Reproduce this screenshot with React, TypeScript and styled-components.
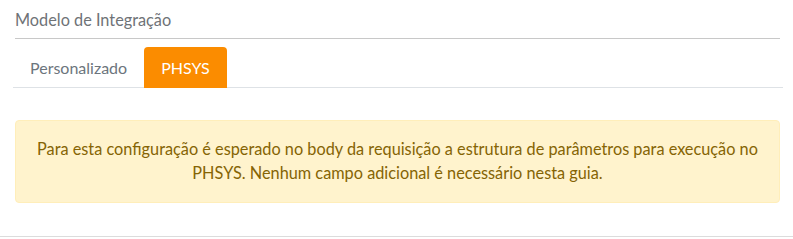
import styled, { createGlobalStyle } from "styled-components";

const GlobalStyle = createGlobalStyle`
    body {
        margin: 0;
        background: #fff;
        font-family: Lato, "Noto Sans", sans-serif;
    }
`;

const Page = styled.div`
    width: 793px;
    border-bottom: 1px solid #dcdcdc;
    padding: 0 13px 33px 15px;
    box-sizing: border-box;
`;

const Title = styled.div`
    padding: 9px 0 7px;
    line-height: 22px;
    font-size: 16.3px;
    color: #6f7377;
    border-bottom: 1px solid #c8c8c8;
`;

const TabNav = styled.div`
    display: flex;
    margin: 8px -3px 0 -2px;
    border-bottom: 1px solid #dee2e6;
`;

const Tab = styled.button<{ $active?: boolean }>`
    height: 41px;
    padding: 0 17px;
    margin-bottom: -1px;
    border: 0;
    border-radius: 4px 4px 0 0;
    font-family: inherit;
    font-size: 16px;
    background: ${(p) => (p.$active ? "#fb8c00" : "transparent")};
    color: ${(p) => (p.$active ? "#fff" : "#6c757d")};
    cursor: pointer;
`;

const Alert = styled.div`
    margin-top: 32px;
    padding: 16px 20px 17px;
    background: #fff3cd;
    border: 1px solid #ffeeba;
    border-radius: 4px;
    color: #856404;
    font-size: 16.3px;
    line-height: 24px;
    text-align: center;
`;

function App() {
    return (
        <>
            <GlobalStyle />
            <Page>
                <Title>Modelo de Integração</Title>
                <TabNav>
                    <Tab>Personalizado</Tab>
                    <Tab $active>PHSYS</Tab>
                </TabNav>
                <Alert>
                    Para esta configuração é esperado no body da requisição a estrutura de parâmetros para execução no
                    PHSYS. Nenhum campo adicional é necessário nesta guia.
                </Alert>
            </Page>
        </>
    );
}
export default App;
